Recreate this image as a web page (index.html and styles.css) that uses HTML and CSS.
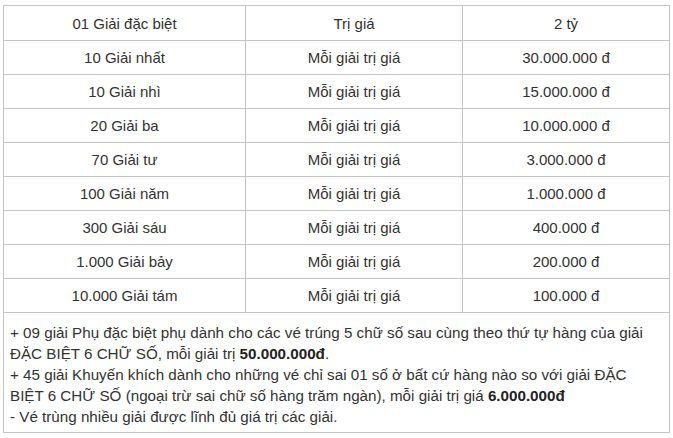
FILE: index.html
```html
<!DOCTYPE html>
<html lang="vi">
<head>
<meta charset="utf-8">
<title>Cơ cấu giải thưởng</title>
<link rel="stylesheet" href="styles.css">
</head>
<body>
<table class="prizes">
  <colgroup>
    <col class="c1">
    <col class="c2">
    <col class="c3">
  </colgroup>
  <tbody>
    <tr class="first"><td>01 Giải đặc biệt</td><td>Trị giá</td><td>2 tỷ</td></tr>
    <tr><td>10 Giải nhất</td><td>Mỗi giải trị giá</td><td>30.000.000 đ</td></tr>
    <tr><td>10 Giải nhì</td><td>Mỗi giải trị giá</td><td>15.000.000 đ</td></tr>
    <tr><td>20 Giải ba</td><td>Mỗi giải trị giá</td><td>10.000.000 đ</td></tr>
    <tr><td>70 Giải tư</td><td>Mỗi giải trị giá</td><td>3.000.000 đ</td></tr>
    <tr><td>100 Giải năm</td><td>Mỗi giải trị giá</td><td>1.000.000 đ</td></tr>
    <tr><td>300 Giải sáu</td><td>Mỗi giải trị giá</td><td>400.000 đ</td></tr>
    <tr><td>1.000 Giải bảy</td><td>Mỗi giải trị giá</td><td>200.000 đ</td></tr>
    <tr><td>10.000 Giải tám</td><td>Mỗi giải trị giá</td><td>100.000 đ</td></tr>
    <tr class="notes-row">
      <td colspan="3" class="notes">+ 09 giải Phụ đặc biệt phụ dành cho các vé trúng 5 chữ số sau cùng theo thứ tự hàng của giải<br>ĐẶC BIỆT 6 CHỮ SỐ, mỗi giải trị <strong>50.000.000đ</strong>.<br>+ 45 giải Khuyến khích dành cho những vé chỉ sai 01 số ở bất cứ hàng nào so với giải ĐẶC<br>BIỆT 6 CHỮ SỐ (ngoại trừ sai chữ số hàng trăm ngàn), mỗi giải trị giá <strong>6.000.000đ</strong><br>- Vé trùng nhiều giải được lĩnh đủ giá trị các giải.</td>
    </tr>
  </tbody>
</table>
</body>
</html>
```

FILE: styles.css
```css
html, body {
  margin: 0;
  padding: 0;
  background: #ffffff;
}

body {
  padding: 5px 0 0 3px;
  font-family: "Liberation Sans", Arial, sans-serif;
  font-size: 15px;
  color: #333333;
}

.prizes {
  border-collapse: collapse;
  width: 666px;
  table-layout: fixed;
}

.c1 { width: 242px; }
.c2 { width: 217px; }
.c3 { width: 207px; }

.prizes td {
  border: 1px solid #c4c4c4;
  text-align: center;
  vertical-align: middle;
  height: 34px;
  padding: 0 6px;
  box-sizing: border-box;
  line-height: 17px;
}

.prizes .first td {
  height: 35px;
}

.prizes td.notes {
  text-align: left;
  height: auto;
  padding: 9px 6px 5px 6px;
  line-height: 21px;
  font-size: 15.2px;
}

.notes strong {
  font-weight: bold;
  color: #222222;
}
```
